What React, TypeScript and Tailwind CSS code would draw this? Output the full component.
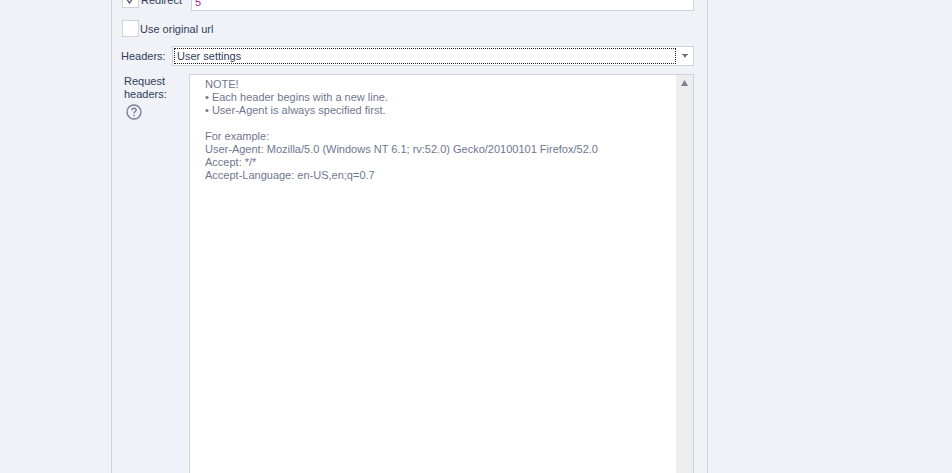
const noteLines = [
  "NOTE!",
  "• Each header begins with a new line.",
  "• User-Agent is always specified first.",
  "\u00a0",
  "For example:",
  "User-Agent: Mozilla/5.0 (Windows NT 6.1; rv:52.0) Gecko/20100101 Firefox/52.0",
  "Accept: */*",
  "Accept-Language: en-US,en;q=0.7",
];

export default function App() {
  return (
    <div className="h-[473px] w-[952px] overflow-hidden bg-[#f0f2f7] font-['Liberation_Sans',sans-serif] text-[11px] leading-[13px] text-[#2f3d5c]">
      <div className="ml-[111px] flex h-[473px] w-[597px] flex-col border-x border-[#cfd2dc] pl-[10px] pr-[13px]">
        {/* redirect row, cut off by the top of the window */}
        <div className="-mt-[12px] flex h-[23px] shrink-0 items-center">
          <div className="flex h-[17px] w-[17px] shrink-0 items-center justify-center border border-[#cfd2dc] bg-white">
            <svg width="9" height="8" viewBox="0 0 9 8" fill="none" stroke="#4b5573" strokeWidth="1.3">
              <path d="M1 3.5L3.5 7L8 0.5" />
            </svg>
          </div>
          <span className="ml-[2px] w-[50px] shrink-0 pt-[1px]">Redirect</span>
          <div className="flex h-[23px] flex-1 items-end border border-[#cfd2dc] bg-white pb-[1px] pl-[3px] text-[#a0209a]">
            5
          </div>
        </div>

        <div className="mt-[9px] flex h-[17px] shrink-0 items-center">
          <div className="h-[17px] w-[17px] shrink-0 border border-[#cfd2dc] bg-white" />
          <span className="ml-[1px] pt-[1px]">Use original url</span>
        </div>

        <div className="mt-[9px] flex h-[20px] shrink-0 items-center">
          <span className="-ml-[1px] w-[51px] shrink-0">Headers:</span>
          <div className="flex h-[20px] flex-1 items-center border border-[#cfd2dc] bg-white p-[1px]">
            <div className="flex h-[16px] flex-1 items-center border border-dotted border-[#222222] pl-[2px]">
              User settings
            </div>
            <div className="flex w-[16px] shrink-0 justify-center pl-[1px]">
              <svg width="6" height="4" viewBox="0 0 6 4" fill="#6b7080">
                <path d="M0 0H6V1H5L3 4L1 1H0Z" />
              </svg>
            </div>
          </div>
        </div>

        <div className="mt-[8px] flex min-h-0 flex-1">
          <div className="w-[67px] shrink-0 pl-[2px] pt-[1px]">
            <div>
              Request
              <br />
              headers:
            </div>
            <svg className="ml-[2px] mt-[3px]" width="16" height="16" viewBox="0 0 16 16" fill="none" stroke="#7a8094" strokeWidth="1.4">
              <circle cx="8" cy="8" r="7" />
              <path d="M5.8 6.3C5.8 4.9 6.8 4.2 8 4.2C9.3 4.2 10.2 5 10.2 6.1C10.2 7.5 8 7.7 8 9.6" />
              <path d="M8 10.8V12.3" />
            </svg>
          </div>
          <div className="-mb-[10px] flex flex-1 border border-[#cfd2dc] bg-white">
            <div className="flex-1 pl-[15px] pt-[3px] text-[#6f7690]">
              {noteLines.map((line, i) => (
                <div key={i} className="whitespace-pre">
                  {line}
                </div>
              ))}
            </div>
            <div className="flex w-[17px] shrink-0 justify-center bg-[#eeeeee] pt-[5px]">
              <svg width="7" height="6" viewBox="0 0 7 6" fill="#7d8290">
                <path d="M3.5 0L7 6H0Z" />
              </svg>
            </div>
          </div>
        </div>
      </div>
    </div>
  );
}
